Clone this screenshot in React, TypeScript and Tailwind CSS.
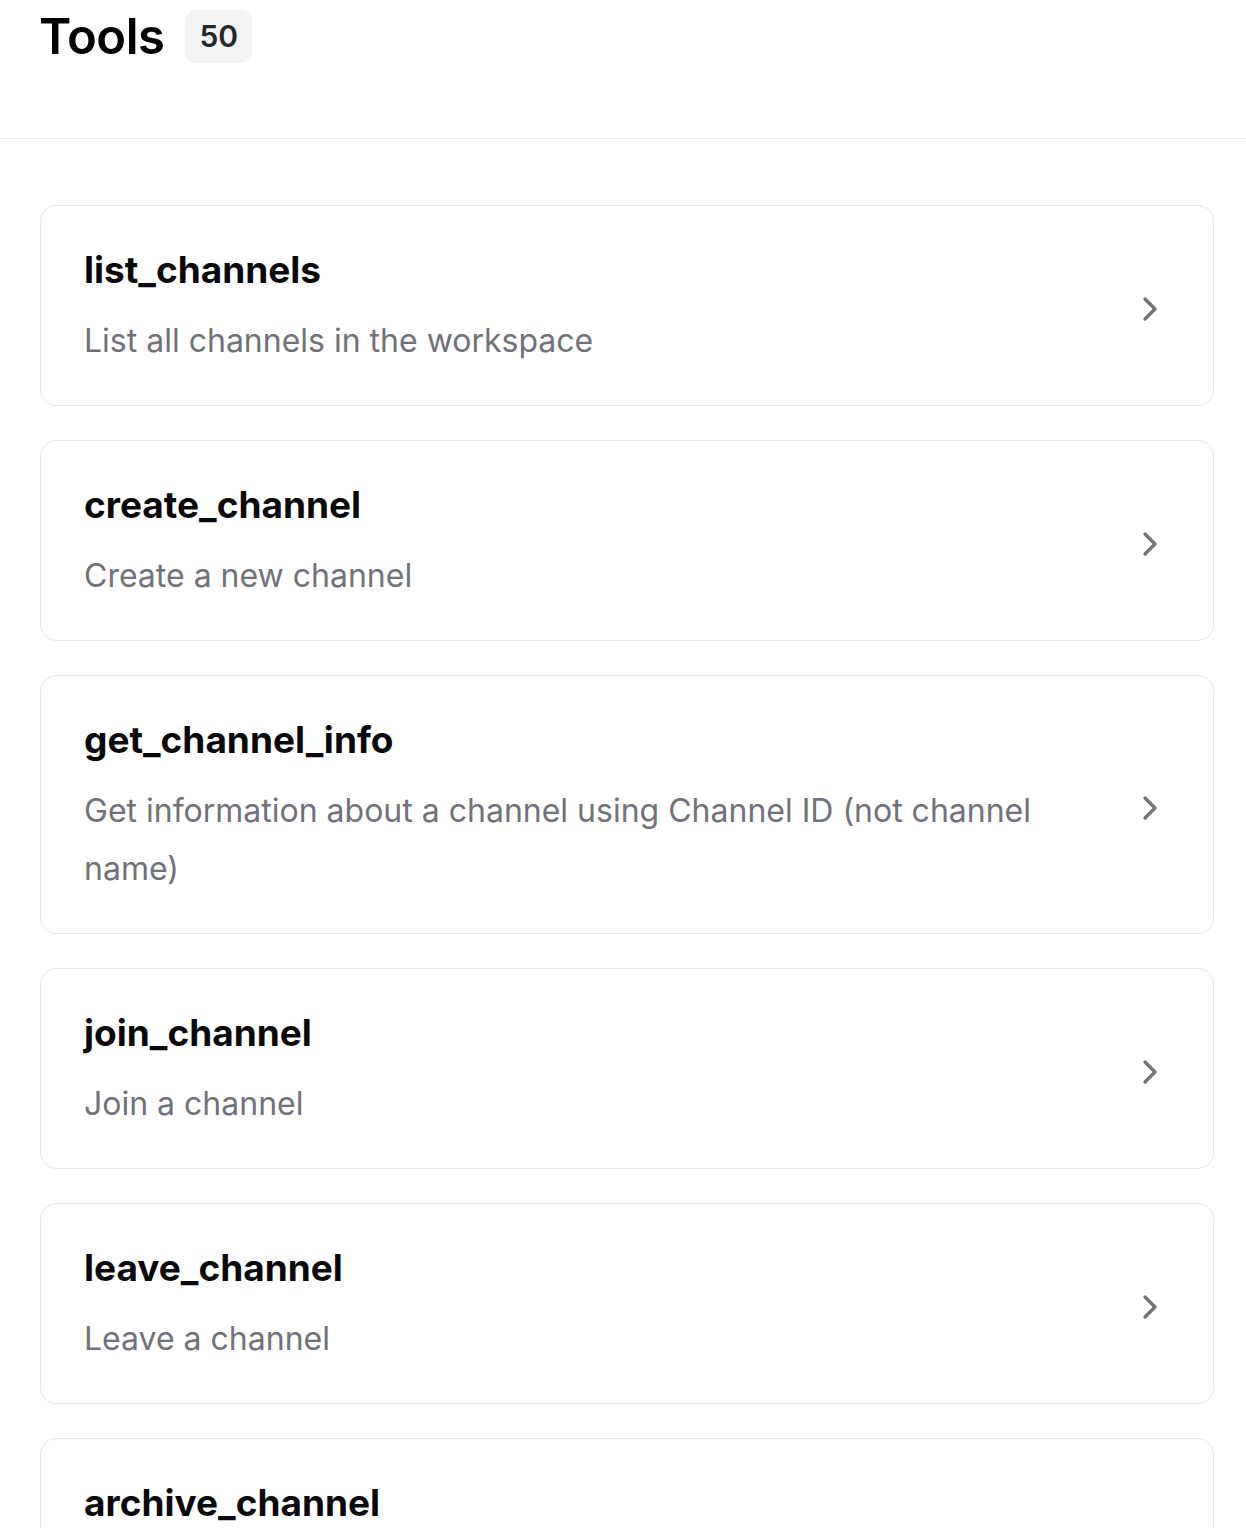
import { ChevronRight } from "lucide-react";

type Tool = {
  name: string;
  description: string;
};

const tools: Tool[] = [
  { name: "list_channels", description: "List all channels in the workspace" },
  { name: "create_channel", description: "Create a new channel" },
  {
    name: "get_channel_info",
    description: "Get information about a channel using Channel ID (not channel name)",
  },
  { name: "join_channel", description: "Join a channel" },
  { name: "leave_channel", description: "Leave a channel" },
  { name: "archive_channel", description: "Archive a channel" },
  { name: "unarchive_channel", description: "Unarchive a channel" },
];

function ToolCard({ tool }: { tool: Tool }) {
  return (
    <div className="flex items-center gap-6 rounded-2xl border border-[#e8e8eb] bg-white pl-[43px] pr-[43px] pt-[42px] pb-[35px]">
      <div className="flex min-w-0 flex-1 flex-col gap-[20px]">
        <div className="text-[37px] font-bold leading-[44px] text-[#09090b]">{tool.name}</div>
        <div className="text-[32px] leading-[58px] text-[#71717a]">{tool.description}</div>
      </div>
      <ChevronRight className="h-10 w-10 shrink-0 text-[#71717a]" strokeWidth={2} />
    </div>
  );
}

export default function App() {
  return (
    <div className="min-h-screen bg-white font-['Inter','Noto_Sans',sans-serif]">
      <header className="border-b border-[#ebebed] pl-[39px] pr-10 pt-[10px] pb-[75px]">
        <div className="flex items-center gap-[21px]">
          <h1 className="text-[49px] font-semibold leading-[53px] tracking-[-0.5px] text-black">Tools</h1>
          <span className="flex h-[53px] items-center rounded-[10px] bg-[#f4f4f6] px-[14px] text-[30px] font-semibold text-[#27272a]">
            50
          </span>
        </div>
      </header>
      <main className="flex flex-col gap-[34px] pl-10 pr-8 pt-[66px] pb-10">
        {tools.map((tool) => (
          <ToolCard key={tool.name} tool={tool} />
        ))}
      </main>
    </div>
  );
}
